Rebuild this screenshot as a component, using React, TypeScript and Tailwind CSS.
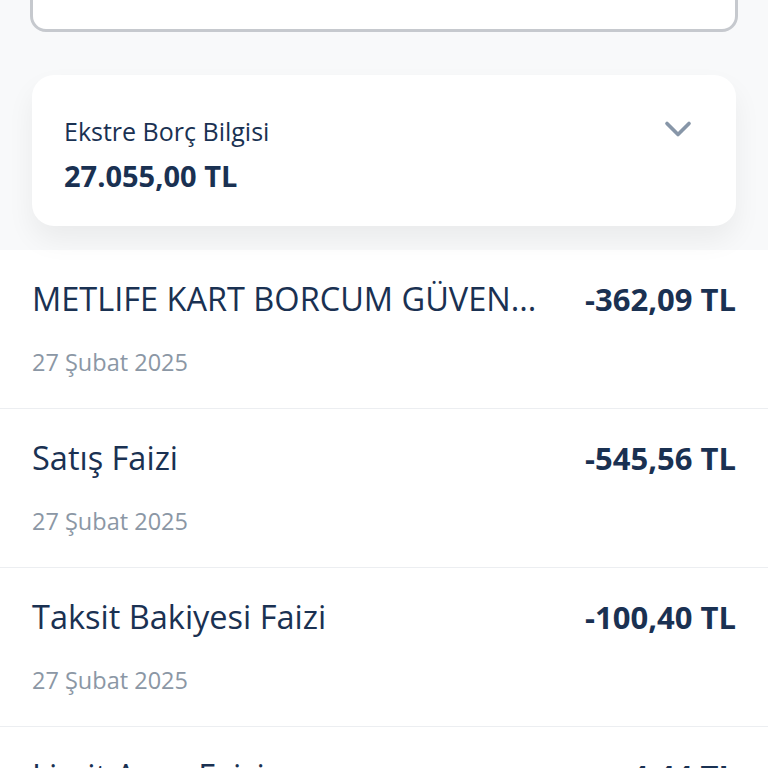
import { ChevronDown } from 'lucide-react';

const rows = [
  { title: 'METLIFE KART BORCUM GÜVEN...', amount: '-362,09 TL', date: '27 Şubat 2025' },
  { title: 'Satış Faizi', amount: '-545,56 TL', date: '27 Şubat 2025' },
  { title: 'Taksit Bakiyesi Faizi', amount: '-100,40 TL', date: '27 Şubat 2025' },
  { title: 'Limit Aşım Faizi', amount: '-4,44 TL', date: '27 Şubat 2025' },
];

export default function App() {
  return (
    <div
      className="w-[768px] h-[768px] overflow-hidden bg-white text-[#1a3152]"
      style={{ fontFamily: '"Open Sans", "Noto Sans", sans-serif' }}
    >
      {/* Üst gri alan */}
      <div className="bg-[#f8f9fa] px-[30px] pb-[24px]">
        <div className="-mt-[48px] h-[80px] rounded-[16px] border-[3px] border-[#c6c9ce] bg-white px-[30px] flex items-start overflow-hidden">
          <span className="text-[22px] leading-[28px] mt-[15px] pl-[230px] text-[#1a1a1a] whitespace-nowrap">Hesap Kesim: 26 Şubat 2025</span>
        </div>

        <div className="mx-[2px] mt-[43px] h-[151px] rounded-[22px] bg-white shadow-[0_14px_28px_rgba(0,0,0,0.06)] pl-[32px] pr-[40px] flex items-start justify-between pt-[40px]">
          <div>
            <p className="text-[25px] leading-[32px] font-medium">Ekstre Borç Bilgisi</p>
            <p className="text-[29px] leading-[36px] font-bold mt-[11px]">27.055,00 TL</p>
          </div>
          <ChevronDown className="w-[44px] h-[44px] text-[#8796a8] mt-[-8px] mr-[-4px]" strokeWidth={2} />
        </div>
      </div>

      {/* Hareket listesi */}
      <div>
        {rows.map((r, i) => (
          <div key={i} className={i > 0 ? 'border-t border-[#eceef1]' : ''}>
            <div className="px-[32px] pt-[29px] pb-[31px]">
              <div className="flex items-center justify-between gap-[44px]">
                <span className="text-[32.5px] leading-[40px] font-medium whitespace-nowrap min-w-0">{r.title}</span>
                <span className="text-[31px] leading-[40px] font-bold whitespace-nowrap">{r.amount}</span>
              </div>
              <p className="mt-[28px] text-[23.5px] leading-[30px] text-[#8b97a5]">{r.date}</p>
            </div>
          </div>
        ))}
      </div>
    </div>
  );
}
